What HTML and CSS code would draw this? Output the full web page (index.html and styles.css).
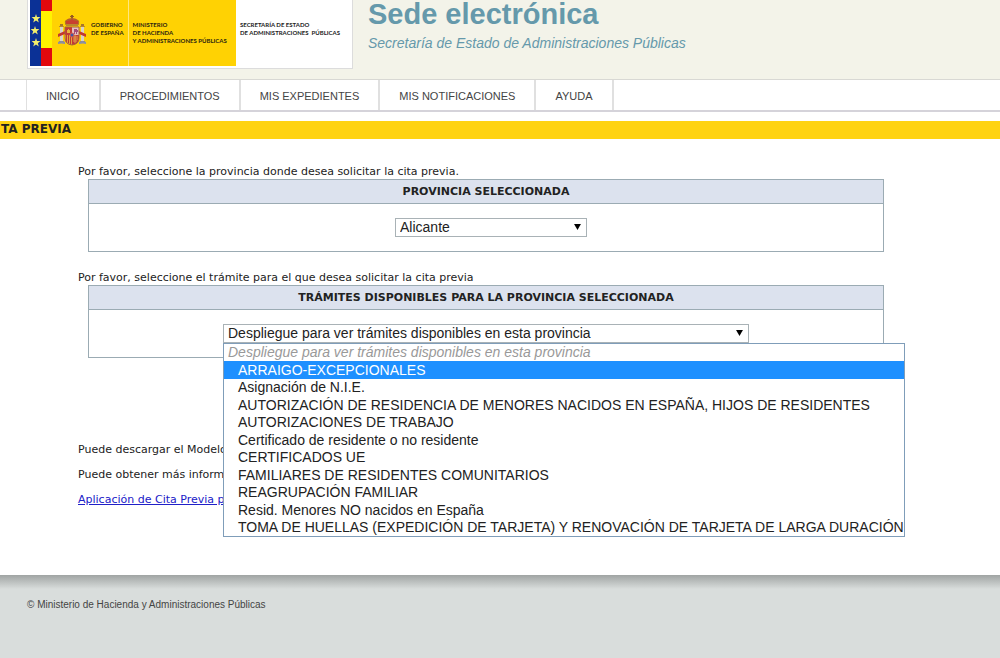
FILE: index.html
```html
<!DOCTYPE html>
<html lang="es">
<head>
  <meta charset="UTF-8">
  <title>Sede electrónica - Cita previa</title>
  <link rel="stylesheet" href="styles.css">
</head>
<body>
  <header class="cabecera">
    <div class="logo">
      <svg class="banderas" width="22" height="66" viewBox="0 0 22 66">
        <rect width="11" height="66" fill="#0b3196"/>
        <rect x="11" width="11" height="66" fill="#e2080e"/>
        <rect x="11" y="11" width="11" height="37" fill="#fff200"/>
        <g fill="#f3ee6b">
          <path id="estrella" d="M6 14l1 3h3.400l-2.600 2.200 1 3.200L6 20.500l-2.800 1.900 1-3.200L1.600 17H5z"/>
          <use href="#estrella" x="-1" y="12"/>
          <use href="#estrella" y="24"/>
        </g>
      </svg>
      <div class="gobierno">
        <svg class="escudo" width="30" height="31" viewBox="0 0 30 31">
          <path d="M3 12h3v16H3zM24 12h3v16h-3z" fill="#d9d3c8"/>
          <path d="M3 9h3v3H3zM24 9h3v3h-3z" fill="#a8762a"/>
          <path d="M2 11h5v1H2zM23 11h5v1h-5zM2 26h5v1H2zM23 26h5v1h-5z" fill="#b98a2c"/>
          <path d="M1 19l7-3v3l-7 3zM29 19l-7-3v3l7 3z" fill="#c4382e"/>
          <path d="M1 27q4-2 7 0v2q-4-1-7 0zM29 27q-4-2-7 0v2q4-1 7 0z" fill="#8a8fa6"/>
          <path d="M14 0h2v1h1v1h-1v2h-2V2h-1V1h1z" fill="#9a5b20"/>
          <path d="M9 10L8 6q3-3 7-3t7 3l-1 4z" fill="#c8402f"/>
          <path d="M9 10q-2-5 2-5 4 0 4-2 0 2 4 2 4 0 2 5" fill="none" stroke="#a8762a"/>
          <path d="M9 9h12v2H9z" fill="#b8872e"/>
          <path d="M8 12h14v11q0 6-7 7-7-1-7-7z" fill="#c23a34"/>
          <path d="M15 12h7v8h-7z" fill="#e4bfc0"/>
          <path d="M17 14h3v1h1v2h-1v2h-1v-2h-1v2h-1z" fill="#a44c78"/>
          <path d="M10 18v-3h1v-1h1v1h1v3z" fill="#e6b340"/>
          <path d="M8 20h7v10q-7-1-7-7z" fill="#e2a53a"/>
          <path d="M9 20h1v7H9zM11 20h1v8h-1zM13 20h1v9h-1z" fill="#c23a34"/>
          <path d="M16 22h5M16 24h5M16 26h4M18 20v8" stroke="#e2a04a" fill="none"/>
          <circle cx="15" cy="20" r="2" fill="#3f5ba6" stroke="#d65a50"/>
          <path d="M8 12h14v11q0 6-7 7-7-1-7-7z" fill="none" stroke="#a7623a"/>
        </svg>
        <p class="organismo">GOBIERNO<br>DE ESPAÑA</p>
        <p class="organismo ministerio">MINISTERIO<br>DE HACIENDA<br>Y ADMINISTRACIONES PÚBLICAS</p>
      </div>
      <p class="organismo secretaria">SECRETARÍA DE ESTADO<br>DE ADMINISTRACIONES &nbsp;PÚBLICAS</p>
    </div>
    <div class="titulo">
      <h1>Sede electrónica</h1>
      <p>Secretaría de Estado de Administraciones Públicas</p>
    </div>
  </header>

  <nav class="menu">
    <a href="#">INICIO</a>
    <a href="#">PROCEDIMIENTOS</a>
    <a href="#">MIS EXPEDIENTES</a>
    <a href="#">MIS NOTIFICACIONES</a>
    <a href="#">AYUDA</a>
  </nav>

  <h2 class="seccion">TA PREVIA</h2>

  <main class="contenido">
    <label for="provincia">Por favor, seleccione la provincia donde desea solicitar la cita previa.</label>
    <section class="caja">
      <h3>PROVINCIA SELECCIONADA</h3>
      <div class="campo">
        <div class="desplegable provincia">
          <select id="provincia">
            <option>Alicante</option>
          </select>
          <svg class="flecha" width="8" height="7" viewBox="0 0 8 7"><path d="M0 0h8L4 7z"/></svg>
        </div>
      </div>
    </section>

    <label for="tramite">Por favor, seleccione el trámite para el que desea solicitar la cita previa</label>
    <section class="caja">
      <h3>TRÁMITES DISPONIBLES PARA LA PROVINCIA SELECCIONADA</h3>
      <div class="campo">
        <div class="desplegable tramite">
          <select id="tramite">
            <option>Despliegue para ver trámites disponibles en esta provincia</option>
          </select>
          <svg class="flecha" width="8" height="7" viewBox="0 0 8 7"><path d="M0 0h8L4 7z"/></svg>
          <ul class="opciones" role="listbox" aria-label="Trámites">
            <li class="vacia" role="option" aria-disabled="true">Despliegue para ver trámites disponibles en esta provincia</li>
            <li class="activa" role="option" aria-selected="true">ARRAIGO-EXCEPCIONALES</li>
            <li role="option">Asignación de N.I.E.</li>
            <li role="option">AUTORIZACIÓN DE RESIDENCIA DE MENORES NACIDOS EN ESPAÑA, HIJOS DE RESIDENTES</li>
            <li role="option">AUTORIZACIONES DE TRABAJO</li>
            <li role="option">Certificado de residente o no residente</li>
            <li role="option">CERTIFICADOS UE</li>
            <li role="option">FAMILIARES DE RESIDENTES COMUNITARIOS</li>
            <li role="option">REAGRUPACIÓN FAMILIAR</li>
            <li role="option">Resid. Menores NO nacidos en España</li>
            <li role="option">TOMA DE HUELLAS (EXPEDICIÓN DE TARJETA) Y RENOVACIÓN DE TARJETA DE LARGA DURACIÓN</li>
          </ul>
        </div>
      </div>
    </section>

    <div class="ayuda">
      <p>Puede descargar el Modelo</p>
      <p>Puede obtener más información</p>
      <p><a href="#">Aplicación de Cita Previa para</a></p>
    </div>
  </main>

  <footer class="pie">© Ministerio de Hacienda y Administraciones Públicas</footer>
</body>
</html>
```

FILE: styles.css
```css
* {
  box-sizing: border-box;
}
body {
  margin: 0;
  min-height: 100vh;
  display: flex;
  flex-direction: column;
  font-family: Verdana, "DejaVu Sans", sans-serif;
  font-size: 11px;
  color: #222;
  background-color: #fff;
}
h1, h2, h3, p, ul {
  margin: 0;
  padding: 0;
}

/* cabecera */
.cabecera {
  display: flex;
  align-items: flex-start;
  gap: 15px;
  height: 80px;
  padding-left: 27px;
  background-color: #f3f3e9;
  border-bottom: 1px solid #d8d8d4;
}
.logo {
  display: flex;
  padding: 0 2px 2px;
  background-color: #fff;
  border: 1px solid #dcdcdc;
  border-top: none;
}
.banderas {
  display: block;
}
.gobierno {
  display: flex;
  width: 184px;
  padding-left: 5px;
  background-color: #ffd203;
}
.escudo {
  flex-shrink: 0;
  margin-top: 15px;
}
.organismo {
  font-family: Lato, sans-serif;
  font-size: 6px;
  line-height: 8px;
  font-weight: bold;
  color: #2b2410;
  white-space: nowrap;
  padding: 21px 0 0 4px;
}
.ministerio {
  margin-left: 4px;
  border-left: 1px solid #ffe680;
}
.secretaria {
  width: 114px;
  color: #222;
}
.titulo {
  font-family: Arial, "Liberation Sans", sans-serif;
  color: #6599ab;
}
.titulo h1 {
  font-size: 29px;
  line-height: 28px;
}
.titulo p {
  font-size: 14px;
  line-height: 30px;
  font-style: italic;
}

/* menu */
.menu {
  display: flex;
  height: 32px;
  padding-left: 26px;
  border-bottom: 2px solid #d5d3da;
}
.menu a {
  padding: 0 19px;
  font-family: Arial, "Liberation Sans", sans-serif;
  font-size: 11px;
  line-height: 32px;
  color: #444;
  text-decoration: none;
  border-right: 2px solid #e0e0e0;
}
.menu a:first-child {
  border-left: 1px solid #e0e0e0;
}
.seccion {
  margin-top: 9px;
  padding: 0 1px 2px;
  font-size: 12px;
  line-height: 16px;
  color: #222;
  background-color: #ffd312;
}

/* contenido */
.contenido {
  flex: 1;
  padding: 25px 116px 0 78px;
}
.contenido label {
  display: block;
  line-height: 15px;
}
.caja {
  margin: 0 0 18px 10px;
  border: 1px solid #9babb3;
}
.caja h3 {
  font-size: 11px;
  line-height: 23px;
  text-align: center;
  background-color: #dce2ee;
  border-bottom: 1px solid #9babb3;
}
.campo {
  display: flex;
  justify-content: center;
  padding: 14px 0;
}
.desplegable {
  position: relative;
  font-family: Arial, "Liberation Sans", sans-serif;
  font-size: 14px;
}
.desplegable select {
  appearance: none;
  display: block;
  width: 100%;
  height: 19px;
  padding: 0 4px;
  font: inherit;
  line-height: 17px;
  color: #222;
  background-color: #fff;
  border: 1px solid #a9b2b6;
  border-radius: 0;
}
.provincia {
  width: 192px;
  margin-left: 10px;
}
.tramite {
  width: 526px;
}
.flecha {
  position: absolute;
  top: 6px;
  right: 6px;
  width: 7px;
  height: 6px;
}
.opciones {
  position: absolute;
  top: 100%;
  left: 0;
  z-index: 1;
  list-style: none;
  white-space: nowrap;
  background-color: #fff;
  border: 1px solid #7f9db9;
}
.opciones li {
  padding: 0 0 0 14px;
  line-height: 17px;
}
.opciones li:nth-child(even) {
  line-height: 18px;
}
.opciones .vacia {
  padding-left: 4px;
  font-style: italic;
  color: #999;
}
.opciones .activa {
  color: #fff;
  background-color: #1e90ff;
}
.ayuda {
  padding-top: 66px;
}
.ayuda p {
  line-height: 15px;
  margin-bottom: 10px;
}
.ayuda a {
  color: #2020c8;
}

/* pie */
.pie {
  height: 83px;
  padding: 23px 27px;
  font-family: Arial, "Liberation Sans", sans-serif;
  font-size: 10px;
  line-height: 14px;
  color: #444;
  background: linear-gradient(#a0a4a3, #d9dddc 14px);
}
```
